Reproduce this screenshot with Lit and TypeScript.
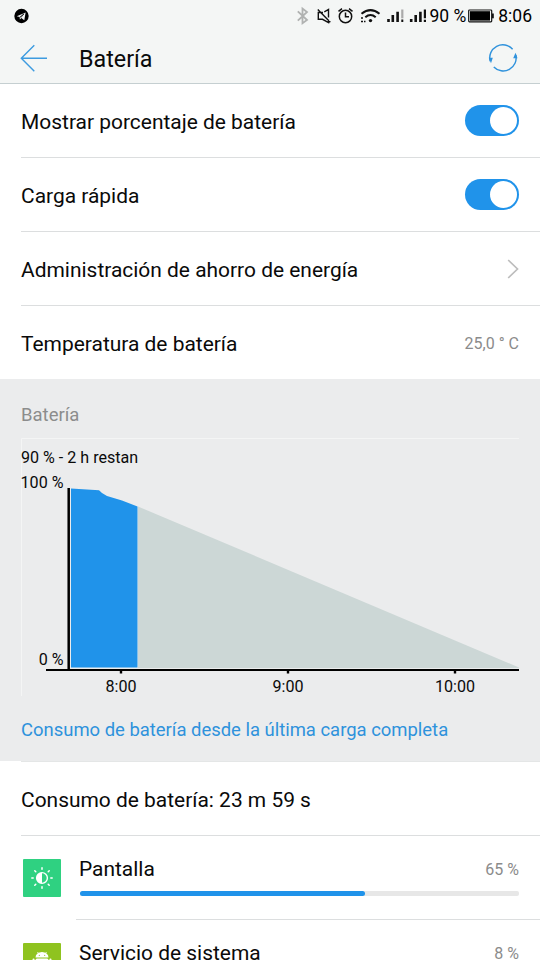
import { LitElement, html, css, svg, nothing } from "lit";
import { customElement, property } from "lit/decorators.js";

const sunRays = [0, 45, 90, 135, 180, 225, 270, 315];

@customElement("status-bar")
class StatusBar extends LitElement {
  static styles = css`
    :host { display: flex; align-items: center; height: 32px; padding: 0 8px 0 14px; color: #000; }
    svg { display: block; flex: none; }
    .spacer { flex: 1; }
    .icons { margin-right: 2px; }
    .text { font-size: 17.5px; line-height: 32px; white-space: pre; }
    .battery { margin: 0 4px 0 2px; }
  `;
  render() {
    return html`
      <svg width="15" height="32" viewBox="0 0 15 32">
        <circle cx="7.5" cy="16" r="7.2" fill="#000" />
        <path d="M2.8 16.3 11.6 12.4 10.3 20.2 7.3 18 5.9 19.4 5.6 17Z" fill="#f4f6f5" />
        <path d="M5.7 17.1 10 13.8 6.6 17.8" stroke="#000" stroke-width=".7" fill="none" />
      </svg>
      <div class="spacer"></div>
      <svg class="icons" width="130" height="32" viewBox="297 0 130 32" fill="none" stroke="#111">
        <path d="M297.8 11.3 307 20 302.5 23.3V8.5L307 12 297.8 20.7" stroke="#b0b2b1" stroke-width="1.8" />
        <path d="M323 12.5H318.3V19.3H322.5L328.5 22.5V19.8M324.3 11.8 328.5 9.5V17.5M317.8 9.5 330.3 22.3" stroke-width="1.4" />
        <circle cx="345.5" cy="16.5" r="6.2" stroke-width="1.5" />
        <path d="M345.5 12.5V16.8H349M338.5 11.3 342 8.6M352.5 11.3 349 8.6" stroke-width="1.5" />
        <path d="M361.5 13.8Q370.5 6.6 379.5 13.8M365.3 17.2Q370.5 12.8 375.7 17.2" stroke-width="2.1" />
        <circle cx="370.5" cy="20.6" r="1.7" fill="#111" stroke="none" />
        <path d="M361 18h2M361 21.5h2M364 21.5h1.5" stroke-width="1.6" />
        <path d="M388.5 19V22M392.8 15V22M397.6 11.8V22" stroke-width="2.6" />
        <path d="M402.3 9.5V18.3" stroke="#aaa" stroke-width="2.2" />
        <path d="M402.3 19.5V22" stroke-width="2" />
        <path d="M411.2 19V22M415.7 15V22M420.4 11.8V22" stroke-width="2.6" />
        <path d="M424.9 9.5V18.3M424.9 19.8V22" stroke-width="2.2" />
      </svg>
      <span class="text">90 %</span>
      <svg class="battery" width="26" height="32" viewBox="0 0 26 32">
        <rect x=".7" y="10" width="23" height="11.8" rx=".8" fill="#f4f6f5" stroke="#111" stroke-width="1.2" />
        <rect x="2" y="11.2" width="20" height="9.4" fill="#000" />
        <rect x="24" y="13.5" width="1.8" height="4.8" fill="#111" />
      </svg>
      <span class="text">8:06</span>
    `;
  }
}

@customElement("title-bar")
class TitleBar extends LitElement {
  static styles = css`
    :host { display: flex; align-items: center; box-sizing: border-box; height: 52px; padding: 0 22px 0 20px; border-bottom: 1px solid #c5cfd1; }
    svg { display: block; flex: none; }
    h1 { flex: 1; margin: 4px 0 0 31px; font-size: 23.3px; font-weight: 400; line-height: 47px; color: #0a0a0a; }
  `;
  render() {
    return html`
      <svg width="28" height="28" viewBox="0 0 28 28" fill="none" stroke="#3d9be0" stroke-width="1.4">
        <path d="M27 14.2H1.3M14.3 1.2 1.3 14.2 14.3 27.2" />
      </svg>
      <h1>Batería</h1>
      <svg width="30" height="30" viewBox="0 0 30 30" fill="none" stroke="#2f92dc" stroke-width="1.4">
        <path d="M2.2 18.2A13 13 0 0 1 24.6 6.3M27.8 12A13 13 0 0 1 5.8 24" />
        <path d="M.7 14.8H4.8L3 20.2ZM29.5 15.2H25.2L27.5 9.8Z" fill="#2f92dc" stroke="none" />
      </svg>
    `;
  }
}

@customElement("setting-row")
class SettingRow extends LitElement {
  @property() label = "";
  @property() value = "";
  @property() kind = "";
  static styles = css`
    :host { display: flex; align-items: center; justify-content: space-between; box-sizing: border-box; height: 74px; margin-left: 21px; padding-right: 21px; border-bottom: 1px solid #dcdedf; }
    :host([last]) { height: 73px; border-bottom: none; }
    .label { font-size: 20.95px; line-height: 28px; color: #0a0a0a; white-space: nowrap; margin-top: 3px; }
    .value { font-size: 16px; color: #8b8b8b; margin-top: 2px; }
    .toggle { display: flex; justify-content: flex-end; box-sizing: border-box; width: 54px; height: 31px; padding: 2px 2.5px 2px 2px; border-radius: 15.5px; background: #2093ea; }
    .knob { width: 27px; height: 27px; border-radius: 50%; background: #fff; }
    svg { display: block; }
  `;
  control() {
    if (this.kind === "toggle") return html`<div class="toggle"><div class="knob"></div></div>`;
    if (this.kind === "link")
      return html`<svg width="12" height="20" viewBox="0 0 12 20" fill="none" stroke="#bdbdbd" stroke-width="1.7"><path d="M1.2 1 10.5 10 1.2 19" /></svg>`;
    return this.value ? html`<span class="value">${this.value}</span>` : nothing;
  }
  render() {
    return html`<span class="label">${this.label}</span>${this.control()}`;
  }
}

@customElement("battery-chart")
class BatteryChart extends LitElement {
  static styles = css`
    :host { display: block; }
    svg { display: block; }
    text { font-size: 16.1px; fill: #0a0a0a; }
  `;
  render() {
    const ticks: [number, string][] = [[121, "8:00"], [288, "9:00"], [455, "10:00"]];
    return html`
      <svg width="498" height="258" viewBox="21 438 498 258">
        <path d="M21.5 696V438.5H519" fill="none" stroke="#f4f5f5" />
        <text x="21" y="463">90 % - 2 h restan</text>
        <text x="63.5" y="488" text-anchor="end">100 %</text>
        <text x="63.5" y="665" text-anchor="end">0 %</text>
        <path d="M138 506.5 519 667.5V668H138Z" fill="#ccd7d6" />
        <path d="M71 488.5 99 490.2 102 493 107 496 122 500.6 137.5 506.5V667.5H71Z" fill="#2093ea" />
        <path d="M68.7 488V670" stroke="#000" stroke-width="2.5" />
        <path d="M46 670H519" stroke="#000" stroke-width="2.2" />
        ${ticks.map(([x, t]) => svg`
          <path d="M${x} 670V673.5" stroke="#000" stroke-width="2.4" />
          <text x=${x} y="692" text-anchor="middle">${t}</text>`)}
      </svg>
    `;
  }
}

@customElement("usage-row")
class UsageRow extends LitElement {
  @property() name = "";
  @property({ type: Number }) percent = 0;
  @property() icon = "";
  static styles = css`
    :host { display: flex; height: 84px; flex: none; padding-left: 23px; }
    svg { display: block; flex: none; margin: 22.5px 15px 0 0; }
    .body { flex: 1; box-sizing: border-box; height: 84px; padding: 18px 21px 0 3px; border-bottom: 1px solid #dcdedf; }
    .line { display: flex; justify-content: space-between; align-items: center; height: 30px; }
    .name { font-size: 20.93px; color: #0a0a0a; }
    .percent { font-size: 16px; color: #8b8b8b; }
    .track { height: 5px; margin: 6.5px 0 0 1px; border-radius: 2px; background: #e7e7e7; }
    .fill { height: 5px; border-radius: 2.5px; background: #2093ea; }
  `;
  glyph() {
    if (this.icon === "screen")
      return svg`
        <rect width="38" height="38" rx="1" fill="#2fd181" />
        <circle cx="19" cy="19" r="5.4" fill="none" stroke="#fff" stroke-width="1.4" />
        <path d="M19 13.6A5.4 5.4 0 0 0 19 24.4Z" fill="#fff" />
        ${sunRays.map((a) => svg`<path d="M19 8.8V10.2" stroke="#fff" stroke-width="1.5" stroke-linecap="round" transform="rotate(${a} 19 19)" />`)}`;
    return svg`
      <rect width="38" height="38" rx="1" fill="#8fc31f" />
      <path d="M12.5 14.4A6.5 5.4 0 0 1 25.5 14.4Z" fill="#fff" />
      <path d="M15.3 10.3 14.6 9M22.7 10.3 23.4 9" stroke="#fff" stroke-width=".9" />
      <rect x="12.5" y="15.4" width="13" height="12" rx="1.5" fill="#fff" />
      <rect x="9.5" y="15.4" width="2.1" height="8.5" rx="1" fill="#fff" />
      <rect x="26.4" y="15.4" width="2.1" height="8.5" rx="1" fill="#fff" />
      <circle cx="16.3" cy="12.3" r=".6" fill="#8fc31f" /><circle cx="21.7" cy="12.3" r=".6" fill="#8fc31f" />`;
  }
  render() {
    return html`
      <svg width="38" height="38" viewBox="0 0 38 38">${this.glyph()}</svg>
      <div class="body">
        <div class="line"><span class="name">${this.name}</span><span class="percent">${this.percent} %</span></div>
        <div class="track"><div class="fill" style="width:${this.percent}%"></div></div>
      </div>
    `;
  }
}

@customElement("app-root")
class AppRoot extends LitElement {
  static styles = css`
    :host { display: block; width: 540px; height: 960px; overflow: hidden; background: #fff; font-family: Roboto, "Liberation Sans", sans-serif; }
    .top { background: #f4f6f5; }
    .history { box-sizing: border-box; height: 382px; padding: 0 21px; background: #ebeced; }
    .heading { padding-top: 24px; height: 35px; line-height: 24px; font-size: 18.5px; color: #8c8c8c; }
    .link { padding-top: 20px; line-height: 28px; font-size: 18.45px; color: #2e92dc; white-space: nowrap; }
    .total { border-top: 1px solid #e4e6e6; height: 75px; padding-bottom: 1px; }
  `;
  render() {
    return html`
      <div class="top"><status-bar></status-bar><title-bar></title-bar></div>
      <setting-row label="Mostrar porcentaje de batería" kind="toggle"></setting-row>
      <setting-row label="Carga rápida" kind="toggle"></setting-row>
      <setting-row label="Administración de ahorro de energía" kind="link"></setting-row>
      <setting-row label="Temperatura de batería" value="25,0 ° C" last></setting-row>
      <div class="history">
        <div class="heading">Batería</div>
        <battery-chart></battery-chart>
        <div class="link">Consumo de batería desde la última carga completa</div>
      </div>
      <setting-row class="total" label="Consumo de batería: 23 m 59 s"></setting-row>
      <usage-row name="Pantalla" percent="65" icon="screen"></usage-row>
      <usage-row name="Servicio de sistema" percent="8" icon="android"></usage-row>
    `;
  }
}
